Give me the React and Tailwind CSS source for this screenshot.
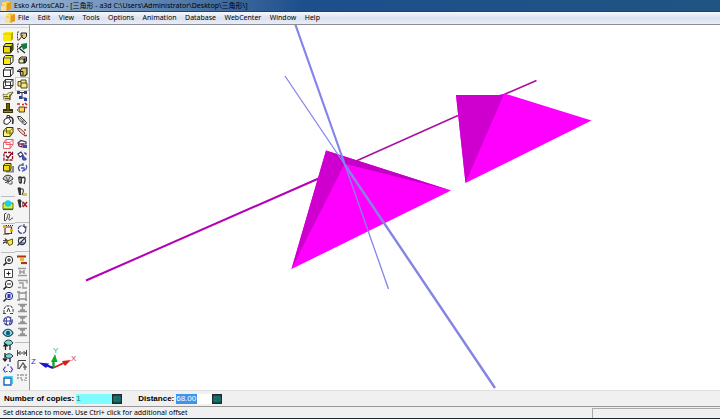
import React from 'react';

const UI_FONT = 'font-["Noto_Sans","Noto_Sans_CJK_SC",sans-serif]';

/* Small drawings for the tool palette, all on a 12x12 grid */
const ICONS = {
  solid: (
    <>
      <path d="M1 4l2-2h8v7l-2 2H1z" fill="#f8ea00" />
      <path d="M9 4l2-2v7l-2 2z" fill="#b7aa00" />
      <path d="M1 4h8l2-2" stroke="#cfc200" strokeWidth=".8" />
    </>
  ),
  solidEdges: (
    <>
      <path d="M1.5 4.5l2-3h7.5v6l-2.500 3.500h-7z" fill="#e8de00" stroke="#222" />
      <path d="M8.500 4.500l2.500-3v6l-2.500 3z" fill="#4b4600" />
      <path d="M1.500 4.500h7v6" stroke="#2b2900" strokeWidth="1.200" />
    </>
  ),
  shaded: (
    <>
      <path d="M1.500 4l2-2.500h7.500v6l-2.500 3h-7z" fill="#fff" stroke="#222" />
      <path d="M2 4.500h6V10H2zM4 2h5v2H4z" fill="#f7ee00" />
      <path d="M1.500 4h7v6.500M8.500 4l2.500-2.500" stroke="#333" strokeWidth=".8" />
    </>
  ),
  hidden: (
    <path d="M1.500 4l2-2.500h7.500v6l-2.500 3h-7zM1.500 4h7v6.500M8.500 4l2.500-2.500" fill="#fff" stroke="#222" />
  ),
  wire: (
    <path
      d="M1.500 4l2-2.500h7.500v6l-2.500 3h-7zM1.500 4h7v6.500M8.500 4l2.500-2.500M3.500 1.500v6h7.500M3.500 7.500l-2 3"
      fill="#fff"
      stroke="#222"
      strokeWidth=".9"
    />
  ),
  fold: (
    <>
      <path d="M1 4l4 1 1-2 5-1-3 5v3H2z" fill="#f6f1b8" stroke="#77733a" strokeWidth=".8" />
      <path d="M2 6h5v4H2z" fill="#d6cf5a" />
      <path d="M2 6.500h4M3 8.500h5M8 4v6M11 2L7 7" stroke="#45431a" strokeWidth=".8" />
    </>
  ),
  stand: (
    <>
      <path d="M4 1h4v6h3v4H1V7h3z" fill="#3b3500" />
      <path d="M6 2v6M2 9.500h8" stroke="#9d9100" />
    </>
  ),
  bucket: (
    <>
      <path d="M2 6l4-3 3 4-4 3.500-3-1z" fill="#fff" stroke="#222" />
      <path d="M5 5V1.500h2.500V4" stroke="#333" />
      <path d="M8 3c3 0 3.500 3 2.500 7" stroke="#222" strokeWidth="1.500" />
    </>
  ),
  cube: (
    <>
      <path d="M1.500 5l3-3.500H11v5l-3 4H1.500z" fill="#fff47a" stroke="#3a3600" />
      <path d="M1.500 5H8v5.500M8 5l3-3.500M4.500 2v5H11" stroke="#5d5800" strokeWidth=".8" />
    </>
  ),
  redWire: (
    <path
      d="M1.500 4.500l2.500-3h7v5l-3 4H1.500zM1.500 4.500H8v6M8 4.500l3-3M4 1.500v5h7"
      fill="#fff"
      stroke="#e8535b"
      strokeWidth=".9"
    />
  ),
  redCheck: (
    <>
      <path d="M2 2.500h8.500v7.500H2z" fill="#fff" stroke="#8a1428" strokeWidth="1.300" strokeDasharray="3 1" />
      <path d="M4 5.500l2 2.500 4-5" stroke="#64101c" strokeWidth="1.300" />
    </>
  ),
  shadow: (
    <>
      <path d="M4 9.500h7V4" stroke="#888" strokeWidth="2" />
      <path d="M1.500 3l2-1.500H9V7L7.500 9h-6z" fill="#e6dc1a" stroke="#3a3600" />
      <path d="M1.500 3.500h6V9" stroke="#3a3600" strokeWidth=".8" />
    </>
  ),
  globe: (
    <>
      <path d="M1 5c1-5 9-5 10 0L6.500 8z" fill="#d5d5d5" stroke="#333" />
      <path d="M4 2.500l2 5M8 2.500l-2 5M6 7v3M3 8.500h2M7 10h3V7" stroke="#444" strokeWidth=".9" />
    </>
  ),
  light: (
    <>
      <path d="M1 4h2l3 3 3-3h2v6H1z" fill="#f4e624" stroke="#2e7a20" strokeWidth=".9" />
      <circle cx="6" cy="4.500" r="3.200" fill="#10d5ea" />
      <path d="M1 10.500h10" stroke="#0d7c33" strokeWidth="1.200" />
    </>
  ),
  curve: <path d="M2.500 10V3l2-1M3 10c3-1 2-8 4-7s-1.500 6 .5 6 1-2 3.500-2" stroke="#444" />,
  crop: (
    <>
      <path d="M3 3h6.500v6.500H3z" fill="#fff9ed" stroke="#7e2a24" strokeWidth="1.200" />
      <path d="M1 1h3v3H1zM8 5h3v2.500H8z" fill="#e0b400" />
      <path d="M4 1.500h7M1.500 10.500h5" stroke="#333" strokeDasharray="1 1" />
    </>
  ),
  burst: (
    <>
      <path d="M1 4.500h5M3 2l2 6M1 8l4-5M1 6.500h4" stroke="#444" strokeWidth=".9" />
      <path d="M5 5l5.500-2v5L7 9.500z" fill="#f4ec4c" stroke="#665c00" />
    </>
  ),
  zoomIn: (
    <>
      <circle cx="7" cy="5" r="3.700" fill="#fff" stroke="#222" />
      <path d="M4.500 7.500L1.500 10.500" stroke="#222" strokeWidth="1.600" />
      <path d="M5 5h4M7 3v4" stroke="#222" />
    </>
  ),
  zoomFit: (
    <>
      <path d="M2.500 2.500h8v8h-8z" fill="#fff" stroke="#444" />
      <path d="M4.500 6.500h4M6.500 4.500v4" stroke="#222" />
    </>
  ),
  zoomOut: (
    <>
      <circle cx="7" cy="5" r="3.700" fill="#fff" stroke="#222" />
      <path d="M4.500 7.500L1.500 10.500" stroke="#222" strokeWidth="1.600" />
      <path d="M5 5h4" stroke="#222" />
    </>
  ),
  zoomSel: (
    <>
      <circle cx="7" cy="5" r="3.700" fill="#dfe4ff" stroke="#232c75" />
      <path d="M4.500 7.500L1.500 10.500" stroke="#333" strokeWidth="1.600" />
      <path d="M5.500 3h3v4h-3z" fill="#2f3bb4" />
    </>
  ),
  orbit: (
    <>
      <path d="M2 10V6l2-3h5l2 3v4" fill="#fff" stroke="#333" strokeDasharray="3 1" />
      <path d="M5 9l1.500-4L8 9M1 10.500h3M8 10.500h3" stroke="#444" />
    </>
  ),
  spin: (
    <>
      <circle cx="6" cy="6" r="4.200" fill="#fff" stroke="#2b3288" strokeWidth="1.200" strokeDasharray="5 1" />
      <path d="M5 2c-1 2-1 6 0 8M8 2.500c1 2 0 5-1 7.500M2 6h8" stroke="#333b98" />
    </>
  ),
  eye: (
    <>
      <path d="M1 6c2.500-5 7.500-5 10 0-2.500 4.500-7.500 4.500-10 0z" fill="#a0e8ec" stroke="#16505a" strokeWidth="1.200" />
      <circle cx="6" cy="6" r="2.200" fill="#125a86" />
    </>
  ),
  eyeUp: (
    <>
      <path d="M2 4c2-4 7-4 9 0-2 3-7 3-9 0z" fill="#7fd6d8" stroke="#1c4043" />
      <path d="M3.500 11V5M1.500 7.500L3.500 5l2 2.500M8 6v5" stroke="#222" strokeWidth="1.300" />
    </>
  ),
  eyeDown: (
    <>
      <path d="M3 5c2-3 6-3 8 0-2 3-6 3-8 0z" fill="#7fd6d8" stroke="#1c4043" />
      <path d="M3 2v8M1 7.500L3 10l2-2.500M8 7v4" stroke="#222" strokeWidth="1.300" />
    </>
  ),
  bracket: (
    <path d="M3.500 3.500L1.500 6.500l2 3M8.500 3.500l2 3-2 3M4 8.500h1.500M7 8.500h1M6 1v2" stroke="#3f45b5" strokeWidth="1.200" />
  ),
  square: (
    <>
      <path d="M2 3h7v7H2z" fill="#fff" stroke="#1d63c4" strokeWidth="1.400" />
      <path d="M2 1.500h8.500V9" stroke="#48cfe0" />
    </>
  ),
  pick: (
    <>
      <path d="M3 2H1.500v8H4" stroke="#333" strokeDasharray="2 1" />
      <path d="M5 3h5.500v3.500L8 9 5 6z" fill="#e5cf86" stroke="#222" />
      <path d="M7 5l-4 5" stroke="#8a2f24" strokeWidth="1.200" />
    </>
  ),
  pickGreen: (
    <>
      <path d="M3 2H1.500v8H4" stroke="#333" strokeDasharray="2 1" />
      <path d="M5 2l6-1v5L7 8z" fill="#107c42" />
      <path d="M6 4L2.500 7M4 7l5 4" stroke="#222" strokeWidth="1.200" />
    </>
  ),
  boxSmall: (
    <>
      <path d="M3 5l2-2h5.500v4L9 9H3z" fill="#f2e7a0" stroke="#222" />
      <path d="M3 5h5v4M9 4v5" stroke="#222" strokeWidth="1.200" />
    </>
  ),
  boxMove: (
    <>
      <path d="M4 5l2-3h5v6l-2 2H5z" fill="#dcc65c" stroke="#222" strokeWidth="1.200" />
      <path d="M1 5.500h6v4M1 5.500L4 3" stroke="#222" />
    </>
  ),
  boxCopy: (
    <>
      <path d="M2 3.500h3V2h5v3h1v5H5V8H2z" fill="#f3e68d" stroke="#4c4610" />
      <path d="M5 5h5M5 4v4" stroke="#4c4610" />
    </>
  ),
  nodesBlue: (
    <>
      <path d="M2 2.500h8M6 3v5M3 8h7" stroke="#333" />
      <path d="M1 1h3v3H1zM8 1h3v3H8zM3 6h3v3H3zM8 8h3v3H8z" fill="#28409c" />
    </>
  ),
  nodesRed: (
    <>
      <path d="M3 5h5.500v5H3z" fill="#f2dd4c" stroke="#5e3d10" />
      <path d="M1 2h3M6 2.500h2M9 1l2 2M8 5.500h3M1 8h1" stroke="#d02525" strokeWidth="1.600" />
    </>
  ),
  brush: (
    <>
      <path d="M1.500 2.500h3l6 6-1 2H8l-5-5z" fill="#e4e4e4" stroke="#333" />
      <path d="M4 4l4.500 5M6 8l3-2" stroke="#444" strokeWidth=".8" />
    </>
  ),
  brushRed: (
    <>
      <path d="M1.500 2.500h2.500l5 4.500-1.500 2L3 5z" fill="#f1dfc9" stroke="#7c3a3a" />
      <path d="M8 4h2M8 9.500h3" stroke="#b03c3c" strokeWidth="1.300" />
    </>
  ),
  ringPurple: (
    <>
      <path d="M2 5l3-2.500L10 4v2H6v3L3 8z" fill="#fff" stroke="#452d55" strokeWidth="1.200" />
      <path d="M2 6h6" stroke="#9a2850" strokeWidth="1.500" />
      <path d="M7 7h4v3H7z" fill="#3a46c8" />
    </>
  ),
  swapBlue: (
    <>
      <path d="M2 4l3-2 2 3-3 2z" fill="#fff" stroke="#2f3470" strokeWidth="1.200" />
      <path d="M6 6h2v2h2v2H7z" fill="#4856ce" stroke="#38409a" />
      <path d="M8 3h2v2" stroke="#333" />
    </>
  ),
  rotateBlue: (
    <>
      <path d="M4 9C1 6 3 2 7 3M7 1v3" stroke="#444c86" strokeWidth="1.200" />
      <path d="M10 3c2 3-1 6-4 6M5 6h3v2" stroke="#4955b8" strokeWidth="1.300" />
    </>
  ),
  mug: (
    <>
      <path d="M2 3c1-1 3-1 4 0v6c-1 1-2 1-3 0z" fill="#333" />
      <path d="M4 4v4" stroke="#bbb" />
      <path d="M6 4c3-2 4 0 2 6" stroke="#333" strokeWidth="1.300" />
    </>
  ),
  mugYellow: (
    <>
      <path d="M1.500 2c1-1 3-1 3.500 0v7H3z" fill="#333" />
      <path d="M5 3c3-1 3 2 1 6" stroke="#444" strokeWidth="1.200" />
      <path d="M7 7h4v3H7z" fill="#ddc838" />
    </>
  ),
  mugRed: (
    <>
      <path d="M1.500 2c1-1 3-1 3.500 0v8L3 9z" fill="#333" />
      <path d="M5 3c2 0 2 3 1 6" stroke="#555" />
      <path d="M7 4l4 5M11 4L7 9" stroke="#b01822" strokeWidth="1.500" />
    </>
  ),
  circleBlue: (
    <>
      <circle cx="6" cy="6.500" r="3.800" fill="#fff" stroke="#3d4790" strokeWidth="1.200" strokeDasharray="5 1" />
      <path d="M8 1v3h3" stroke="#444" />
    </>
  ),
  circleCut: (
    <>
      <circle cx="6" cy="6" r="3.600" fill="#eceefb" stroke="#2a3268" strokeWidth="1.200" />
      <path d="M1.500 10.500L10 2M2 3h4M5 8h4" stroke="#333" strokeWidth="1.200" />
    </>
  ),
  alignRed: (
    <>
      <path d="M1 2.500h9" stroke="#a8341c" strokeWidth="2" />
      <path d="M4 4h4v3H4z" fill="#e3bb3a" />
      <path d="M5 9h6" stroke="#a23a20" strokeWidth="2.200" />
    </>
  ),
  alignA: <path d="M2 2.500h8M4 4v4M8 4v4M2 9.500h9M4 6h4" stroke="#999" strokeWidth="1.500" />,
  alignB: <path d="M2 2.500h9v3M3 5h4v5h4M2 9.500h3" stroke="#999" strokeWidth="1.400" />,
  alignC: <path d="M3 3h7v6H3zM1 2h3M9 2h2M1 10h3M9 10h2" stroke="#8f8f8f" strokeWidth="1.300" />,
  alignD: <path d="M2 2.500h9M2 9.500h9M4 4h5M4 8h5M6.500 4v4" stroke="#939393" strokeWidth="1.400" />,
  dimH: <path d="M1.500 3v6M10.500 3v6M2 6h8M4.500 4L2.500 6l2 2M7.500 4l2 2-2 2" stroke="#444" />,
  dimAngle: <path d="M2 1.500h8M2 2v8M3 10l4-6 2 3v4M7 8h4" stroke="#444" strokeWidth="1.100" />,
  dimMore: <path d="M2 3v6M5 3v6h4M10 3v7M6 4h2" stroke="#777" strokeWidth="1.100" strokeDasharray="2 1" />,
};

const LEFT_TOOLS = [
  {
    gap: 'mt-0',
    items: ['solid', 'solidEdges', 'shaded', 'hidden', 'wire', 'fold', 'stand', 'bucket', 'cube', 'redWire', 'redCheck', 'shadow', 'globe'],
  },
  { gap: 'mt-2.5 pt-0.5 border-t', items: ['light', 'curve'] },
  { gap: 'border-t', items: ['crop', 'burst'] },
  {
    gap: 'mt-1 pt-0.5 border-t',
    items: ['zoomIn', 'zoomFit', 'zoomOut', 'zoomSel', 'orbit', 'spin', 'eye', 'eyeUp', 'eyeDown', 'bracket', 'square'],
  },
];

const RIGHT_TOOLS = [
  {
    gap: 'mt-0',
    items: ['pick', 'pickGreen', 'boxSmall', 'boxMove', 'boxCopy', 'nodesBlue', 'nodesRed', 'brush', 'brushRed', 'ringPurple', 'swapBlue', 'rotateBlue', 'mug', 'mugYellow', 'mugRed'],
  },
  { gap: 'mt-3 border-t', items: ['circleBlue', 'circleCut'] },
  { gap: 'mt-1 pt-0.5 border-t', items: ['alignRed', 'alignA', 'alignB', 'alignC', 'alignD', 'alignD', 'alignD'] },
  { gap: 'mt-1 pt-1 border-t', items: ['dimH', 'dimAngle', 'dimMore'] },
];

const MENUS = ['File', 'Edit', 'View', 'Tools', 'Options', 'Animation', 'Database', 'WebCenter', 'Window', 'Help'];

const ToolColumn = ({ groups, active }) => (
  <div className="flex flex-col w-3.5">
    {groups.map((group, i) => (
      <div key={i} className={`flex flex-col items-center border-[#bdbdbd] ${group.gap}`}>
        {group.items.map((name, j) => (
          <button
            key={j}
            aria-label={name}
            className={`w-3 h-3 shrink-0 ${name === active ? 'bg-[#fdfbf2] outline outline-[#c9c9c9]' : ''}`}
          >
            <svg viewBox="0 0 12 12" className="block w-3 h-3" fill="none">
              {ICONS[name]}
            </svg>
          </button>
        ))}
      </div>
    ))}
  </div>
);

const AppLogo = () => (
  <svg viewBox="0 0 12 12" className="w-3 h-3 shrink-0">
    <path d="M2 3l4-2 5 1v7l-5 2-4-1z" fill="#f8cf45" />
    <path d="M6 4l5-2v7l-5 2z" fill="#e39a20" />
    <path d="M2 3l4 1v7" fill="none" stroke="#fff0a0" strokeWidth=".8" />
    <path d="M1 6h4v5H1z" fill="#f3dfa0" />
  </svg>
);

const Scene = () => (
  <svg viewBox="30 25 690 365" preserveAspectRatio="xMinYMin slice" className="block w-full h-full">
    {/* Move axis */}
    <path d="M86 280.500L322 177" stroke="#b400b4" strokeWidth="2" />
    <path d="M355 161.500L458 115.500M503 95L536.500 80.500" stroke="#a9109f" strokeWidth="1.600" />

    {/* Original */}
    <path d="M326 150.500L451 190.500L291.500 269z" fill="#ff00ff" />
    <path d="M326 150.500L346 161L291.500 269z" fill="#cf00cf" />
    <path d="M326 150.500L451 190.500L346 164z" fill="#c300c3" />

    {/* Copy */}
    <path d="M456 95L499 95L506 94L591.500 120.500L465.500 183z" fill="#ff00ff" />
    <path d="M456 95L499 95L504 94L465.500 183z" fill="#cf00cf" />

    {/* Rotation axes */}
    <path d="M295.500 25L345 165" stroke="#8484ee" strokeWidth="2.200" />
    <path d="M345 165L388.500 289" stroke="#8484ee" strokeWidth="1.300" />
    <path d="M285 76L345 165" stroke="#8484ee" strokeWidth="1.300" />
    <path d="M345 165L495 388" stroke="#8484e4" strokeWidth="2.400" />

    {/* View triad */}
    <path d="M53 368L66 362" stroke="#e01818" strokeWidth="1.800" />
    <path d="M62 361L71 360L65 366z" fill="#e01818" />
    <path d="M53.500 368V360" stroke="#12a828" strokeWidth="2.400" />
    <path d="M51 362L55 354L57.500 362z" fill="#12a828" />
    <path d="M53 368L46 365" stroke="#1818c8" strokeWidth="2.400" />
    <path d="M38.500 362.500L49 363.500L46 368z" fill="#1818c8" />
    <g fontSize="8" className="font-['Liberation_Sans',sans-serif]">
      <text x="71" y="361" fill="#e03434">X</text>
      <text x="53" y="353" fill="#3fae4b">Y</text>
      <text x="31" y="364" fill="#2f2fc0">Z</text>
    </g>
  </svg>
);

const PickButton = ({ label }) => (
  <button aria-label={label} className="w-2.5 h-2.5 bg-[#0f4f4c] border border-[#1d2b2b] flex items-center justify-center">
    <svg viewBox="0 0 8 8" className="w-2 h-2" fill="none" stroke="#2b9085" strokeWidth=".8">
      <path d="M1 2h6v4H1zM3 2v4M5 3v2" />
    </svg>
  </button>
);

const App = () => {
  return (
    <div className={`h-screen flex flex-col overflow-hidden bg-[#f0f0f0] text-black ${UI_FONT}`}>
      <header className="h-3 shrink-0 flex items-center gap-0.5 overflow-hidden bg-linear-to-r from-[#a3bdd8] via-[#1d4f8c] via-42% to-[#205482] border-b border-[#263f60]">
        <AppLogo />
        <h1 className="text-[7px] leading-3 whitespace-nowrap text-black">
          Esko ArtiosCAD - [三角形 - a3d C:\Users\Administrator\Desktop\三角形\]
        </h1>
      </header>

      <nav className="h-[13px] shrink-0 flex items-center pl-1 gap-0.5 bg-linear-to-b from-[#f6f8fd] via-[#dbe1f0] to-[#e8ecf7] border-b border-[#8d8d94]">
        <AppLogo />
        <div className="flex justify-between w-[302px]">
          {MENUS.map((menu) => (
            <button key={menu} className="text-[7px] leading-3">{menu}</button>
          ))}
        </div>
      </nav>

      <main className="flex-1 min-h-0 flex">
        <aside className="w-[30px] shrink-0 flex flex-col border-r border-[#999] bg-[#f4f4f4] overflow-hidden">
          <div className="h-[5px] shrink-0 flex items-center">
            <div className="flex-1 h-px bg-[#d8d8d8]" />
          </div>
          <div className="flex pl-px">
            <ToolColumn groups={LEFT_TOOLS} />
            <ToolColumn groups={RIGHT_TOOLS} active="boxCopy" />
          </div>
        </aside>
        <section className="flex-1 min-w-0 bg-white">
          <Scene />
        </section>
      </main>

      <form className="h-[17px] shrink-0 flex items-center pl-1 border-t border-[#dedede] border-b border-b-[#999] font-['Liberation_Sans',sans-serif] text-[8px] leading-3">
        <label htmlFor="copies" className="font-bold mr-0.5">Number of copies:</label>
        <input id="copies" defaultValue="1" className="w-9 h-2.5 bg-[#7ffcff] text-[#35777c] outline-none" />
        <PickButton label="Pick copies" />
        <label htmlFor="distance" className="font-bold ml-4 mr-0.5">Distance:</label>
        <div className="w-9 h-2.5 flex bg-white">
          <input id="distance" defaultValue="68.00" className="w-[21px] h-2.5 bg-[#3d94ed] text-white outline-none" />
        </div>
        <PickButton label="Pick distance" />
      </form>

      <footer className="h-3 shrink-0 flex items-center border-b border-[#1b2433]">
        <p className="flex-1 pl-[3px] text-[7px] leading-[11px] whitespace-nowrap">
          Set distance to move. Use Ctrl+ click for additional offset
        </p>
        <div className="w-32 h-2.5 border-t border-l border-[#aaa]" />
      </footer>
    </div>
  );
};

export default App;
